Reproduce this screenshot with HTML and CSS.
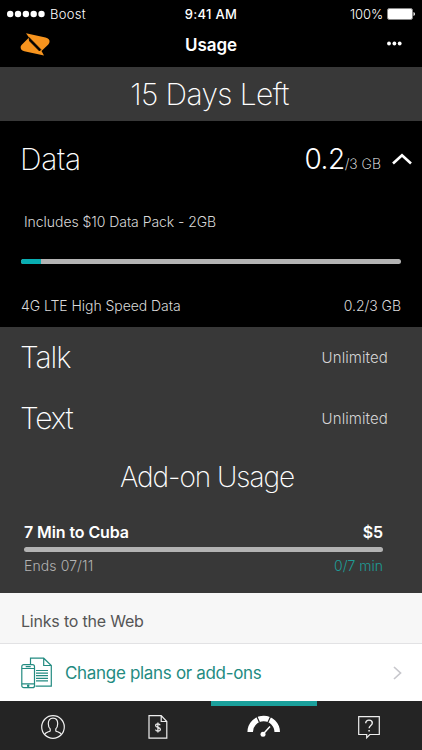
FILE: index.html
```html
<!DOCTYPE html>
<html lang="en">
<head>
<meta charset="utf-8">
<title>Usage</title>
<link rel="stylesheet" href="styles.css">
</head>
<body>
<div class="app">
  <div class="status">
    <div class="carrier"><svg width="38" height="8" viewBox="0 0 38 8" fill="#fff"><circle cx="3.2" cy="4" r="3.2"/><circle cx="11" cy="4" r="3.2"/><circle cx="18.9" cy="4" r="3.2"/><circle cx="26.7" cy="4" r="3.2"/><circle cx="34.5" cy="4" r="3.2"/></svg><span class="carrier-name">Boost</span></div>
    <div class="clock">9:41 AM</div>
    <div class="power"><span>100%</span><svg width="28" height="12" viewBox="0 0 28 12"><rect x=".5" y=".5" width="25" height="11" rx="1.8" fill="#fff" stroke="#888"/><path d="M26.5 4v4q1.5-.4 1.5-2t-1.500-2z" fill="#fff"/></svg></div>
  </div>
  <header class="nav">
    <svg class="logo" width="30" height="23" viewBox="0 0 30 23"><path d="M6 .3 25.500 4.500Q30 5.500 29.500 9 29.300 10.400 28.300 11.500L21.500 18 24 22.500 4.300 18.200Q0 17 .7 13.500 1 12.500 2 11.500L9 4.500z" fill="#f7941e"/><path d="M9 4.500 20.800 16.500 19.500 18 9.600 8z" fill="#000" stroke="#000" stroke-width=".8"/></svg>
    <h1 class="title">Usage</h1>
    <svg class="more" width="15" height="5" viewBox="0 0 15 5" fill="#fff"><circle cx="2" cy="2.500" r="1.900"/><circle cx="7.400" cy="2.500" r="1.900"/><circle cx="12.700" cy="2.500" r="1.900"/></svg>
  </header>
  <section class="days"><span class="days-text">15 Days Left</span></section>
  <section class="data">
    <div class="data-head">
      <h2 class="heading heading-data">Data</h2>
      <div class="amount"><span class="used">0.2</span><span class="quota">/3 GB</span></div>
      <svg class="caret" width="20" height="12" viewBox="0 0 20 12"><path d="M1 10.500 10 2.200 19 10.500" fill="none" stroke="#fff" stroke-width="2.600"/></svg>
    </div>
    <p class="pack"><span class="pack-text">Includes $10 Data Pack - 2GB</span></p>
    <div class="bar data-bar"><div class="fill"></div></div>
    <div class="data-foot"><span class="speed">4G LTE High Speed Data</span><span class="speed-amount">0.2/3 GB</span></div>
  </section>
  <section class="plans">
    <div class="plan"><h2 class="heading heading-talk">Talk</h2><span class="unlimited">Unlimited</span></div>
    <div class="plan"><h2 class="heading heading-text">Text</h2><span class="unlimited">Unlimited</span></div>
    <h2 class="addon-title"><span class="addon-title-text">Add-on Usage</span></h2>
    <div class="addon">
      <div class="addon-head"><span class="addon-name">7 Min to Cuba</span><span class="price">$5</span></div>
      <div class="bar"></div>
      <div class="addon-foot"><span class="ends">Ends 07/11</span><span class="minutes">0/7 min</span></div>
    </div>
  </section>
  <h3 class="links-title"><span class="links-text">Links to the Web</span></h3>
  <div class="link">
    <svg width="32" height="32" viewBox="0 0 32 32" fill="none" stroke="#238b81" stroke-width="1.200"><path d="M9.500 7V1.200h13.200l7.600 7.300v20.700H14.500M22.700 1.200v7.300h7.600M15 13.500h12M15 16.100h12M15 18.700h12M15 21.300h12M15 23.900h12"/><rect x=".8" y="7.700" width="12.700" height="23" rx="2" fill="#fff"/><path d="M.8 11.500h12.700M.8 26.800h12.700M4.700 9.600h5"/><circle cx="7.200" cy="28.800" r=".7" fill="#238b81"/></svg>
    <a class="link-label">Change plans or add-ons</a>
    <svg class="chevron" width="9" height="14" viewBox="0 0 9 14"><path d="M1 1l6.500 6L1 13" fill="none" stroke="#c7c7cc" stroke-width="1.700"/></svg>
  </div>
  <nav class="tabs">
    <div class="tab"><svg width="26" height="26" viewBox="0 0 26 26" fill="none" stroke="#eee" stroke-width="1.200"><circle cx="13" cy="13" r="11.300"/><path d="M4.500 20.500c1.200-2.300 4-2.500 5.700-3.600v-2c-1.300-1.200-1.900-2.800-1.900-5.200 0-3.400 1.600-5.500 4.700-5.500s4.700 2.100 4.700 5.500c0 2.400-.6 4-1.900 5.200v2c1.700 1.100 4.500 1.300 5.700 3.600"/></svg></div>
    <div class="tab"><svg width="22" height="26" viewBox="0 0 22 26" fill="none" stroke="#eee" stroke-width="1.200"><path d="M2 1.700h12.200l5.600 5.800v16.600H2zM14.200 1.700v5.800h5.600"/><path d="M13.200 11.200c-.4-1-1.100-1.400-2.400-1.400-1.400 0-2.200.7-2.200 1.700 0 2.300 4.800 1.300 4.800 3.800 0 1.100-.9 1.800-2.400 1.800-1.400 0-2.200-.5-2.600-1.500M10.900 8.500v10" stroke-width="1.200"/></svg></div>
    <div class="tab active"><svg width="34" height="26" viewBox="0 0 34 26"><path d="M3.200 19a13.500 13.500 0 0 1 27 0" fill="none" stroke="#fff" stroke-width="5.500"/><path d="M12.400 9.200 9 1.500M21 9.200 24.500 1.500" stroke="#242424" stroke-width="1.200"/><path d="M16 21.200 23 13.600" stroke="#fff" stroke-width="1.500"/><circle cx="16" cy="21.200" r="2.500" fill="#fff"/></svg></div>
    <div class="tab"><svg width="24" height="26" viewBox="0 0 24 26" fill="none" stroke="#eee" stroke-width="1.200"><path d="M1.700 2.700h20.600v17.800H12.800l-3.100 3.200v-3.200h-8z"/><path d="M8.700 9.200c0-2 1.300-3.100 3.300-3.100s3.300 1.100 3.300 2.900c0 2.500-3.200 2.500-3.200 5.300" stroke-width="1.400"/><path d="M12.100 16v1.600" stroke-width="1.500"/></svg></div>
  </nav>
</div>
</body>
</html>
```
FILE: styles.css
```css
* { box-sizing: border-box; margin: 0; padding: 0; }
body { background: #000; font-family: Inter, "Liberation Sans", sans-serif; color: #fff; }
svg { display: block; flex: none; }
span, h1, h2, h3, a { white-space: nowrap; }
.app { width: 422px; height: 750px; overflow: hidden; display: flex; flex-direction: column; }
.app > * { flex: none; }
.status { height: 28px; display: grid; grid-template-columns: 1fr auto 1fr; align-items: center; padding: 0 7px; font-size: 13px; line-height: 28px; }
.carrier { display: flex; align-items: center; gap: 5px; }
.carrier-name { font-weight: 300; letter-spacing: .3px; }
.clock { font-weight: 500; letter-spacing: .3px; }
.power { display: flex; align-items: center; justify-content: flex-end; gap: 4px; font-weight: 300; letter-spacing: -.1px; }
.nav { height: 39px; display: grid; grid-template-columns: 1fr auto 1fr; padding: 0 20px; }
.logo { margin-top: 5px; }
.title { font-size: 17px; line-height: 34px; font-weight: 600; letter-spacing: -.1px; }
.more { justify-self: end; margin-top: 13px; }
.days { height: 54px; background: #383838; text-align: center; font-size: 30px; line-height: 55px; font-weight: 250; letter-spacing: -.6px; }
.days-text { margin-right: 3px; }
.data { height: 206px; padding: 0 21px; }
.data-head { height: 80px; padding-bottom: 5px; display: flex; align-items: center; margin-right: -11px; }
.heading { font-size: 30px; line-height: 60px; font-weight: 250; margin-left: -1px; }
.heading-data { letter-spacing: -.3px; }
.heading-talk { letter-spacing: -1.1px; }
.heading-text { letter-spacing: -1.1px; }
.plan .heading { margin-top: -2px; }
.amount { margin-left: auto; margin-top: 5px; display: flex; align-items: baseline; line-height: 60px; }
.used { font-size: 28px; font-weight: 350; letter-spacing: -.5px; }
.quota { font-size: 14px; font-weight: 250; }
.caret { margin-left: 11px; }
.pack { height: 58px; padding: 11px 0 0 3px; font-size: 14px; line-height: 20px; font-weight: 300; color: #d9d9d9; letter-spacing: -.05px; }
.bar { height: 5px; border-radius: 3px; background: #b3b3b3; overflow: hidden; }
.fill { width: 20px; height: 5px; background: #08aeb2; }
.data-foot { display: flex; justify-content: space-between; margin-top: 32px; font-size: 14px; line-height: 20px; font-weight: 300; color: #d9d9d9; letter-spacing: -.05px; }
.plans { height: 266px; background: #383838; }
.plan { height: 61px; display: flex; justify-content: space-between; align-items: center; padding: 0 34px 0 21px; }
.unlimited { font-size: 15px; font-weight: 300; color: #d5d5d5; letter-spacing: .1px; }
.addon-title { height: 55px; padding-right: 8px; font-size: 28px; line-height: 56px; font-weight: 250; letter-spacing: -1.05px; text-align: center; }
.addon { padding: 17px 39px 0 24px; }
.addon-head, .addon-foot { display: flex; justify-content: space-between; }
.addon-head { height: 26px; font-size: 16px; line-height: 22px; font-weight: 600; letter-spacing: -.1px; }
.addon-foot { font-size: 14px; line-height: 20px; margin-top: 4px; font-weight: 300; color: #b3b3b3; }
.ends { letter-spacing: .1px; }
.minutes { color: #1e9d97; }
.links-title { height: 51px; background: #f7f7f7; border-bottom: 1px solid #e2e2e4; padding-left: 21px; font-size: 16px; line-height: 57px; font-weight: 400; letter-spacing: -.2px; color: #555; }
.link { height: 57px; background: #fff; display: flex; align-items: center; padding: 0 20px 0 21px; }
.link-label { margin-left: 12px; font-size: 17px; letter-spacing: -.32px; color: #238b81; }
.chevron { margin-left: auto; }
.tabs { height: 49px; background: #242424; display: grid; grid-template-columns: repeat(4, 1fr); }
.tab { display: flex; justify-content: center; padding-top: 13px; }
.active { border-top: 5px solid #1ba09c; padding-top: 7px; }
```
